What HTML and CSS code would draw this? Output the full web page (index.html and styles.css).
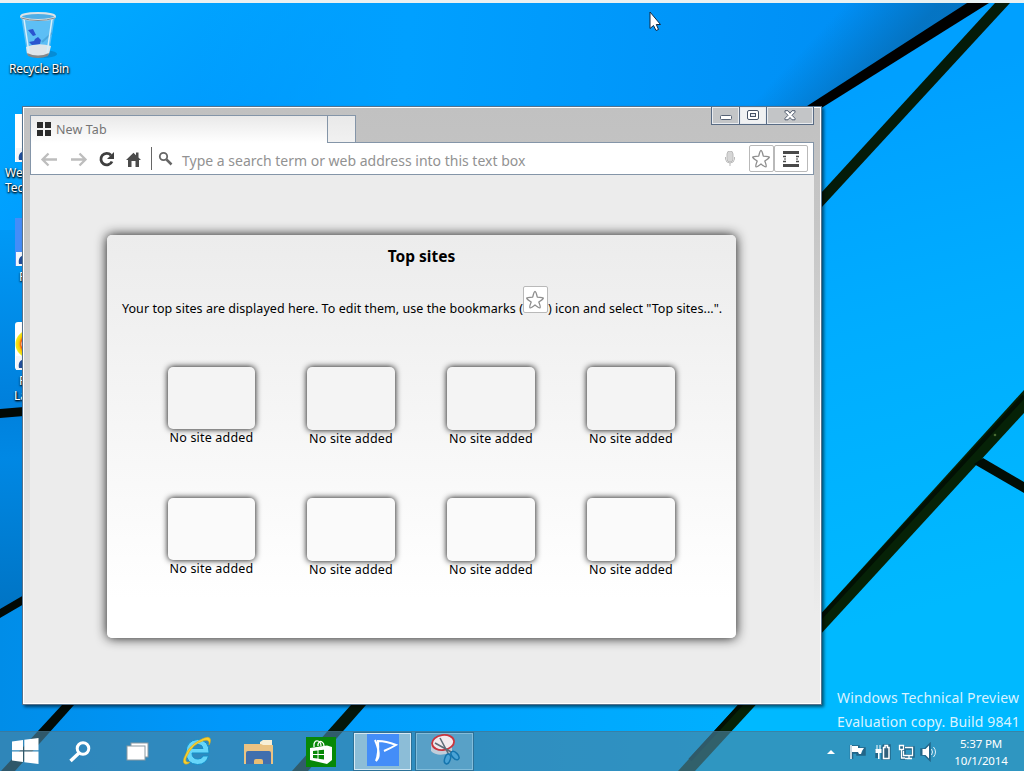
FILE: index.html
```html
<!DOCTYPE html>
<html lang="en">
<head>
<meta charset="utf-8">
<title>Desktop</title>
<link rel="stylesheet" href="styles.css">
</head>
<body>
<svg width="0" height="0" class="defs">
  <symbol id="star" viewBox="0 0 20 20"><path d="M10 1.500 Q11 1.500 12.300 7.200 Q18.500 7.400 18.300 8.300 Q18 9.300 13.800 12 Q15.800 17 15 17.800 Q14.200 18.400 10 15 Q5.800 18.400 5 17.800 Q4.200 17 6.200 12 Q2 9.300 1.700 8.300 Q1.500 7.400 7.700 7.200 Q9 1.500 10 1.500Z" fill="#fff" stroke="#8e8e8e" stroke-width="1.300" stroke-linejoin="round"/></symbol>
  <symbol id="shortcut" viewBox="0 0 14 14"><rect width="14" height="14" fill="#f4f6fa"/><path d="M12 3H8C4 4 2 7 3 12h3c0-3 1-4 6-4z" fill="#214f9b"/></symbol>
</svg>
<div class="desktop">
  <svg class="wallpaper" width="1024" height="768" viewBox="0 3 1024 768">
    <defs>
      <linearGradient id="sky" gradientUnits="userSpaceOnUse" x1="0" y1="0" x2="480" y2="560"><stop offset="0" stop-color="#00aeff"/><stop offset=".35" stop-color="#0098fe"/><stop offset="1" stop-color="#0084e8"/></linearGradient>
      <linearGradient id="skyTop" gradientUnits="userSpaceOnUse" x1="200" y1="0" x2="900" y2="60"><stop offset="0" stop-color="#00a6ff" stop-opacity="0"/><stop offset=".3" stop-color="#00a0ff"/><stop offset="1" stop-color="#008df4"/></linearGradient>
      <linearGradient id="edge" gradientUnits="userSpaceOnUse" x1="835" y1="15" x2="885" y2="62"><stop offset="0" stop-color="#0570bb" stop-opacity="0"/><stop offset="1" stop-color="#0570bb" stop-opacity=".85"/></linearGradient>
      <linearGradient id="left" gradientUnits="userSpaceOnUse" x1="0" y1="230" x2="0" y2="610"><stop offset="0" stop-color="#0099f6"/><stop offset=".45" stop-color="#0080dc"/><stop offset=".6" stop-color="#0088e4"/><stop offset="1" stop-color="#0074c4"/></linearGradient>
      <linearGradient id="right" gradientUnits="userSpaceOnUse" x1="830" y1="100" x2="960" y2="600"><stop offset="0" stop-color="#00a0ff"/><stop offset=".45" stop-color="#00adff"/><stop offset="1" stop-color="#00b9ff"/></linearGradient>
      <linearGradient id="bottom" gradientUnits="userSpaceOnUse" x1="0" y1="0" x2="740" y2="0"><stop offset="0" stop-color="#008de8"/><stop offset=".3" stop-color="#0098fb"/><stop offset="1" stop-color="#00b0ff"/></linearGradient>
    </defs>
    <rect width="1024" height="771" fill="url(#sky)"/>
    <rect x="200" width="824" height="120" fill="url(#skyTop)"/>
    <path d="M700 0H1000V110H700Z" fill="url(#edge)"/>
    <rect y="230" width="30" height="390" fill="url(#left)"/>
    <path d="M0 614L30 596V700H760V771H0Z" fill="url(#bottom)"/>
    <path d="M815 106L980 3H1024V771H690L760 700Z" fill="url(#right)"/>
    <path d="M804 108L967 3H989L815 112Z" fill="#000"/>
    <path d="M995 3H1010L821 208V193Z" fill="#041b09"/>
    <path d="M1024 390V413L695 771H678Z" fill="#062207"/>
    <path d="M1024 396L690 760" stroke="#021004" stroke-width="4"/>
    <path d="M974 464L983 458L1024 482V493Z" fill="#020d05"/>
    <circle cx="995" cy="435" r="1.300" fill="#496b32"/>
    <path d="M0 409L24 407V416L0 418Z" fill="#020905"/>
    <path d="M0 609L24 595V604L0 618Z" fill="#020905"/>
    <path d="M62 705H74L15 771H1Z" fill="#020b07"/>
    <path d="M351 705H366L308 771H292Z" fill="#04160a"/>
  </svg>

  <div class="shortcut bin">
    <svg width="42" height="50" viewBox="0 0 42 50">
      <ellipse cx="24" cy="43" rx="15" ry="4" fill="#0879ba" opacity=".6"/>
      <path d="M3 5L9 42Q20 49 31 42L37 5Z" fill="#7cc6f2" opacity=".75"/>
      <path d="M8 36L9 43Q20 49 31 43L33 35Q20 31 8 36Z" fill="#dde5ea"/>
      <path d="M9 42Q20 47 31 42L30 45Q20 49 10 45Z" fill="#868888"/>
      <path d="M10 19l5-1 3 6-3 1zM17 28l3-2 3 3-1 4-8 1-3-3 5-1z" fill="#2b55cf"/>
      <path d="M34 22L24 31" stroke="#4aa7df" stroke-width="2"/>
      <path d="M6 8L11 42M34 8L29 42" stroke="#d5effb" stroke-width="1.500"/>
      <ellipse cx="20" cy="5.500" rx="17" ry="3.500" fill="#4faee6" stroke="#dbe3e7" stroke-width="2"/>
      <path d="M3 7Q20 12 37 7" fill="none" stroke="#7f8b93"/>
    </svg>
    <span>Recycle Bin</span>
  </div>
  <div class="shortcut s1"><i class="tile white"><svg width="14" height="14"><use href="#shortcut"/></svg></i><span>Welcome to<br>Tech Preview</span></div>
  <div class="shortcut s2"><i class="tile blue"><svg width="14" height="14"><use href="#shortcut"/></svg></i><span>P</span></div>
  <div class="shortcut s3"><i class="tile ring"><svg width="14" height="14"><use href="#shortcut"/></svg></i><span>P</span><span class="wide">La</span></div>

  <div class="watermark"><div>Windows Technical Preview</div><div class="build">Evaluation copy. Build 9841</div></div>

  <section class="window">
    <div class="tabs">
      <div class="tab">
        <svg width="14" height="14"><path d="M0 0h6v6H0zM8 0h6v6H8zM0 8h6v6H0zM8 8h6v6H8z" fill="#2b2b2b"/></svg>
        <span>New Tab</span>
      </div>
      <div class="newtab"></div>
      <div class="controls">
        <div class="min"><svg width="13" height="6"><rect x=".5" y=".5" width="11" height="4" rx="1" fill="#fff" stroke="#566275"/></svg></div>
        <div class="max"><svg width="13" height="11"><rect x=".5" y=".5" width="11" height="9" rx="1.500" fill="#fff" stroke="#465266"/><rect x="3.500" y="3.500" width="5" height="3" fill="#e4e7ee" stroke="#465266"/></svg></div>
        <div class="close"><svg width="12" height="11" viewBox="0 0 12 11"><path d="M1 .7h3l2 2.600L8 .7h3v1.500L8 5.300l3 3v1.500H8L6 7.500 4 9.800H1V8.300l3-3-3-3z" fill="#fff" stroke="#505c6f"/></svg></div>
      </div>
    </div>
    <div class="toolbar">
      <svg class="nav" width="144" height="31" viewBox="31 143 144 31">
        <g fill="none" stroke="#bdbdbd" stroke-width="2.300"><path d="M57 159.500H43M48.500 153.500L42.500 159.500L48.500 165.500M71 159.500H85M79.500 153.500L85.500 159.500L79.500 165.500"/></g>
        <path d="M111 155.200A5.800 5.800 0 1 0 112 161.500" fill="none" stroke="#3f3f3f" stroke-width="2.800"/><path d="M114 152V159H107Z" fill="#3f3f3f"/>
        <path d="M126 160L133.500 152.800L136 155.200V152.500H138.500V157.500L141 160H139V167H135.500V161H131.500V167H128V160Z" fill="#4b4b4b"/>
        <path d="M151.500 147V170" stroke="#666"/>
        <circle cx="163.500" cy="156.500" r="3.700" fill="none" stroke="#666" stroke-width="1.800"/><path d="M166.500 159.500L171.500 164.500" stroke="#666" stroke-width="2.500"/>
      </svg>
      <span class="placeholder">Type a search term or web address into this text box</span>
      <svg class="mic" width="10" height="16" viewBox="0 0 10 16"><rect x="2" y="0" width="6" height="11" rx="3" fill="#d6d6d6" stroke="#bbb"/><path d="M.5 6V8Q1 12 5 12T9.500 8V6M5 12V15" fill="none" stroke="#bbb"/></svg>
      <div class="btn fav"><svg width="20" height="20"><use href="#star"/></svg></div>
      <div class="btn menu"><svg width="16" height="16"><path d="M0 0h16v3H0zM0 13h16v3H0z" fill="#494949"/><path d="M0 5.500h3M0 10.500h3M13 5.500h3M13 10.500h3" stroke="#494949" stroke-width="1.500"/><path d="M1 8h2M13 8h2" stroke="#494949"/></svg></div>
    </div>
    <main class="page">
      <div class="card">
        <h1>Top sites</h1>
        <p><span>Your top sites are displayed here. To edit them, use the bookmarks (</span><span class="btn inline"><svg width="20" height="20"><use href="#star"/></svg></span><span>) icon and select "Top sites...".</span></p>
        <div class="sites">
          <div class="site"><i></i><span>No site added</span></div>
          <div class="site"><i></i><span>No site added</span></div>
          <div class="site"><i></i><span>No site added</span></div>
          <div class="site"><i></i><span>No site added</span></div>
          <div class="site"><i></i><span>No site added</span></div>
          <div class="site"><i></i><span>No site added</span></div>
          <div class="site"><i></i><span>No site added</span></div>
          <div class="site"><i></i><span>No site added</span></div>
        </div>
      </div>
    </main>
  </section>

  <footer class="taskbar">
    <div class="app start"><svg width="27" height="26" viewBox="0 0 27 26"><path d="M0 3.500L11 2V12.300H0ZM12.300 1.800L26.500 0V12.300H12.300ZM0 13.500H11V24L0 22.500ZM12.300 13.500H26.500V26L12.300 24.200Z" fill="#fff"/></svg></div>
    <div class="app find"><svg width="22" height="22" viewBox="0 0 22 22"><circle cx="14" cy="7.500" r="5.800" fill="none" stroke="#fff" stroke-width="3"/><path d="M10 12L1.500 20" stroke="#fff" stroke-width="3.500"/></svg></div>
    <div class="app views"><svg width="23" height="19" viewBox="0 0 23 19"><rect x="5" y="1" width="17" height="14" fill="#fff" stroke="#8b9aa2" /><rect x="1" y="4" width="18" height="14" fill="#fff" stroke="#8b9aa2"/></svg></div>
    <div class="app ie"><svg width="32" height="32" viewBox="0 0 32 32"><path d="M28 18H11Q11 24 17 24Q21 24 22 21H27.500Q25 29.500 16.500 29.500Q5 29 5 17Q5.500 5.500 16.500 4.500Q28.500 5 28 18ZM11.500 13.500H22Q21.500 9.500 17 9.500Q12.500 9.500 11.500 13.500Z" fill="#66d6fa" stroke="#168fc9"/><path d="M6 29Q1 30 3 23Q7 11 19 5Q29 -.500 29.500 5Q29.500 8 28 10Q29 4 23 5.500Q11 9 5.500 22Q3 28 9 27Q7.500 28.800 6 29Z" fill="#f9cf2e" stroke="#d9a916" stroke-width=".6"/></svg></div>
    <div class="app files"><svg width="31" height="26" viewBox="0 0 31 26"><path d="M16 3L19 1H28V7H16Z" fill="#f8efd5"/><path d="M0 5H17L19 6H29V25H0Z" fill="#eac383"/><path d="M2 25V14Q2 12 4 12H25Q27 12 27 14V25Z" fill="#406fae"/><path d="M10 25V22Q10 20 12 20H17Q19 20 19 22V25Z" fill="#e9bd73"/></svg></div>
    <div class="app store"><svg width="30" height="30" viewBox="0 0 30 30"><rect width="30" height="30" fill="#078807"/><path d="M4 11L21 8.500L26 10V23L21 27L4 23Z" fill="#fff"/><path d="M8 10V7Q9 3 12 4Q15 5 15 9M12 9V7Q14 3 16 5Q18 6 18 9" fill="none" stroke="#fff" stroke-width="1.300"/><path d="M7 14L11.500 13.500V17H7ZM12.500 13.300L18 12.700V17H12.500ZM7 18H11.500V21.500L7 21ZM12.500 18H18V22.500L12.500 21.700Z" fill="#078807"/></svg></div>
    <div class="app running active"><svg width="32" height="32" viewBox="0 0 32 32"><rect width="32" height="32" fill="#448df8"/><path d="M8 6Q15 22 9 27Q12 20 11 7Q19 7 29 11Q24 14 17 17" fill="none" stroke="#fff" stroke-width="2"/></svg></div>
    <div class="app running"><svg width="32" height="32" viewBox="0 0 32 32"><path d="M2 10V17Q9 24 23 18V10Z" fill="#c1cdda"/><ellipse cx="14" cy="8.500" rx="11" ry="7.500" fill="#f2e9ed" stroke="#c9353e" stroke-width="1.800" transform="rotate(-8 14 8)"/><path d="M11 4L20 21M6 9L24 19" stroke="#5f6c78" stroke-width="1.600"/><ellipse cx="18.500" cy="25" rx="2.800" ry="5" transform="rotate(18 18.500 25)" fill="#4aa3d6" stroke="#1474ad" stroke-width="1.500"/><ellipse cx="26" cy="21.500" rx="2.800" ry="5" transform="rotate(-42 26 21.500)" fill="#4aa3d6" stroke="#1474ad" stroke-width="1.500"/></svg></div>
    <svg class="tray" width="114" height="20" viewBox="825 742 114 20">
      <path d="M827 754L831 750L835 754Z" fill="#fff"/>
      <g fill="none" stroke="#173e59" stroke-width="3.500" opacity=".55"><path d="M851.500 745V759M852 747H858V749H864V754H858V752H852ZM877 750V758M884 746H889V758H883V748ZM902 746V758H907M904 748H913V756H904ZM922 750H925L929 746V758L925 754H922Z"/></g>
      <path d="M851 745V759" stroke="#fff" stroke-width="1.500"/><path d="M852 746H858V748H864L862 751L861 754H859L858 752H852Z" fill="#fff"/>
      <path d="M877 745V749M880 745V749" stroke="#fff"/><path d="M875.500 749H881.500V753H875.500ZM878 753H879.500V759H878Z" fill="#fff"/><path d="M883.500 747.500H885V745.500H887.500V747.500H889V758.500H883.500Z" fill="#33617c" stroke="#fff" stroke-width="1.500"/>
      <path d="M899.500 745.500H903.500V749.500H899.500ZM901.500 750V758H905M905 747.500H912.500V755.500H903.500V751M909 756V758M905 758.500H912" fill="none" stroke="#fff" stroke-width="1.300"/>
      <path d="M922.500 749H925.500L929 745.500V758.500L925.500 755H922.500Z" fill="#fff"/><path d="M931.500 749Q933.500 752 931.500 755M933.500 747Q937.500 752 933.500 757" fill="none" stroke="#e2f0f9"/>
    </svg>
    <div class="clock"><div>5:37 PM</div><div>10/1/2014</div></div>
  </footer>

  <svg class="pointer" width="14" height="21" viewBox="0 0 14 21"><path d="M1 1V17.500L4.500 14.500L7 19.500L9.500 18.500L7.300 13.500H11.500Z" fill="#fff" stroke="#102a44"/></svg>
</div>
</body>
</html>
```
FILE: styles.css
```css
* { box-sizing: border-box; }
body { margin: 0; background: #fff; font-family: "Noto Sans", "Open Sans", sans-serif; font-size: 12px; overflow: hidden; }
svg { display: block; flex: none; }
.defs { position: absolute; }
.desktop { position: relative; width: 1024px; height: 771px; border-top: 3px solid #e9f1f2; overflow: hidden; }
.wallpaper { position: absolute; left: 0; top: 0; }

/* desktop items, placed on a free canvas */
.shortcut { position: absolute; display: flex; flex-direction: column; align-items: center; color: #fff; line-height: 15px; white-space: nowrap; text-align: center; text-shadow: 1px 1px 2px #000, 0 1px 2px #000; }
.bin { left: 4px; top: 8px; width: 70px; letter-spacing: -.3px; }
.s1 { left: 5px; top: 111px; align-items: flex-start; text-align: left; }
.s1 .tile, .s2 .tile { margin-left: 10px; }
.s2 { left: 5px; top: 215px; align-items: flex-start; }
.s3 { left: 5px; top: 319px; align-items: flex-start; }
.s3 .tile { margin-left: 10px; }
.s2 span, .s3 span { margin-left: 14px; }
.s3 .wide { margin-left: 9px; }
.tile { display: flex; align-items: flex-end; width: 48px; height: 48px; margin-bottom: 3px; padding-left: 1px; }
.white { background: #fff; }
.blue { background: #448df8; }
.ring { background: radial-gradient(ellipse at 18px 22px, #fff 11px, #ee5b18 12px, #ffc800 14px, #eced20 17px, #fff 18px); border-radius: 3px; }

.watermark { position: absolute; left: 837px; top: 683px; color: #d9f3ff; font-size: 14px; letter-spacing: .14px; line-height: 24px; white-space: nowrap; }

.window { position: absolute; left: 22px; top: 103px; width: 800px; height: 599px; padding: 0 7px; display: flex; flex-direction: column; border: 1px solid #56728c; box-shadow: inset 0 0 0 1px #fff, 2px 2px 3px rgba(0,0,0,.55); background: linear-gradient(#c1c1c1, #c6c6c6 20%, #ececec 85%); }
.tabs { display: flex; height: 36px; align-items: flex-end; margin-bottom: -1px; z-index: 1; }
.tab { display: flex; align-items: center; gap: 5px; width: 298px; height: 28px; padding: 0 0 1px 6px; border: 1px solid #8495a8; border-bottom: 0; background: linear-gradient(#e9e9e9, #fff); color: #747474; font-size: 12.5px; letter-spacing: .1px; }
.newtab { width: 28px; height: 28px; border: 1px solid #8495a8; border-left: 0; background: linear-gradient(#e9e9e9, #f1f1f1); }
.controls { display: flex; align-self: flex-start; margin-left: auto; height: 18px; }
.controls > div { display: flex; align-items: center; justify-content: center; border: 1px solid #586b84; border-top: 0; box-shadow: inset 0 0 0 1px #e8ebef; background: #c3c5c7; }
.controls .min { width: 29px; padding: 4px 0 0 2px; }
.controls .max { width: 27px; border-left: 0; background: #f0f1f2; }
.controls .close { width: 47px; border-left: 0; }
.toolbar { display: flex; align-items: center; height: 33px; padding-right: 5px; background: #fff; border: 1px solid #8495a8; }
.placeholder { margin-left: 7px; color: #929292; font-size: 14px; white-space: nowrap; padding-top: 3px; }
.mic { margin-left: auto; margin-right: 14px; }
.btn { display: flex; align-items: center; justify-content: center; width: 25px; height: 27px; border: 1px solid #b9b9b9; border-radius: 2px; background: #fff; }
.btn.fav { padding-right: 1px; }
.btn.menu { width: 34px; }
.page { flex: 1; background: #ececec; padding: 60px 0 0 77px; margin-bottom: 1px; }
.card { width: 629px; height: 403px; padding: 10px 0 0 15px; border-radius: 5px; background: linear-gradient(#ececec, #fff 90%); box-shadow: 0 0 12px #111; }
.card h1 { margin: 0 15px 0 0; font-size: 15.5px; line-height: 22px; text-align: center; color: #000; }
.card p { display: flex; align-items: flex-end; margin: 19px 0 0; height: 31px; font-size: 12.5px; letter-spacing: .048px; line-height: 18px; white-space: nowrap; color: #000; }
.card p > span { margin-bottom: -1px; }
.card p > .btn.inline { align-self: flex-start; margin: 0; }
.sites { display: grid; grid-template-columns: repeat(4, 140px); grid-auto-rows: 131px; margin: 50px 0 0 19px; }
.site { display: flex; flex-direction: column; align-items: center; }
.site i { width: 88px; height: 63px; border-radius: 5px; box-shadow: 0 0 6px #000; }
.site:nth-child(-n+4) i { background: #f4f4f4; }
.site:nth-child(n+5) i { background: #fafafa; }
.site:nth-child(4n+1) { padding-left: 1px; }
.site:nth-child(4n+1) i { width: 87px; height: 62px; }
.site span { font-size: 12.5px; letter-spacing: .18px; line-height: 18px; white-space: nowrap; color: #000; }

.taskbar { position: absolute; left: 0; right: 0; bottom: 0; height: 40px; display: flex; align-items: center; background: rgba(72,130,160,.65); border-top: 1px solid rgba(70,105,125,.4); }
.app { display: flex; align-items: center; justify-content: center; }
.start { width: 50px; padding-bottom: 2px; }
.find { width: 60px; }
.views { width: 54px; }
.ie { width: 66px; padding-bottom: 2px; }
.files { width: 59px; }
.store { width: 64px; }
.running { width: 59px; height: 39px; margin-right: 3px; padding-bottom: 3px; border: 1px solid #2c7197; box-shadow: inset 0 0 0 1px #82bddb; background: rgba(150,190,210,.4); }
.running.active { box-shadow: inset 0 0 0 1px #d6e9f4; background: rgba(190,215,228,.65); }
.tray { margin-left: auto; }
.clock { width: 85px; padding-right: 1px; color: #fff; font-size: 11.5px; line-height: 17px; text-align: center; letter-spacing: -.15px; }
.pointer { position: absolute; left: 649px; top: 8px; }
```
